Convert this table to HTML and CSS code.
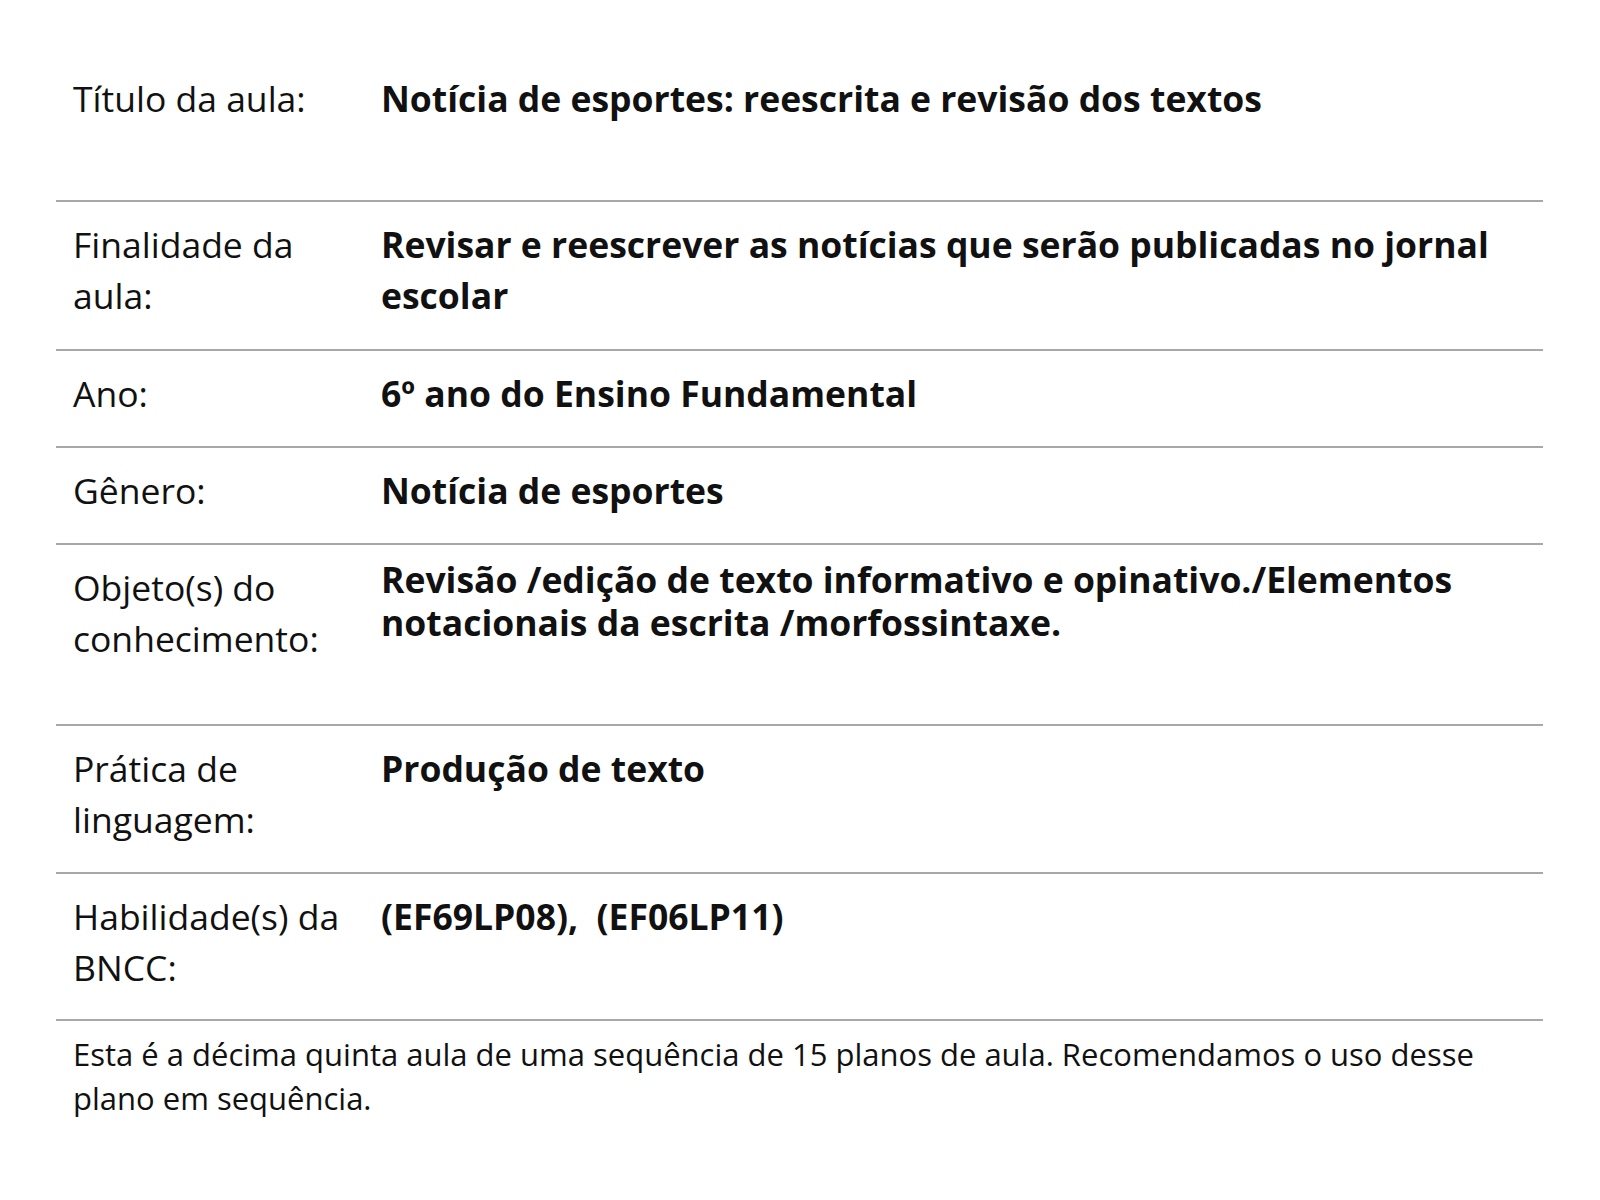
FILE: index.html
```html
<!DOCTYPE html>
<html lang="pt-BR">
<head>
<meta charset="utf-8">
<title>Plano de aula</title>
<link rel="stylesheet" href="styles.css">
</head>
<body>
<div class="sheet">
  <div class="row row-first">
    <div class="label">Título da aula:</div>
    <div class="value">Notícia de esportes: reescrita e revisão dos textos</div>
  </div>
  <div class="row row-two">
    <div class="label">Finalidade da aula:</div>
    <div class="value">Revisar e reescrever as notícias que serão publicadas no jornal escolar</div>
  </div>
  <div class="row">
    <div class="label">Ano:</div>
    <div class="value">6º ano do Ensino Fundamental</div>
  </div>
  <div class="row">
    <div class="label">Gênero:</div>
    <div class="value">Notícia de esportes</div>
  </div>
  <div class="row row-tall">
    <div class="label">Objeto(s) do conhecimento:</div>
    <div class="value value-tight">Revisão /edição de texto informativo e opinativo./Elementos notacionais da escrita /morfossintaxe.</div>
  </div>
  <div class="row">
    <div class="label">Prática de linguagem:</div>
    <div class="value">Produção de texto</div>
  </div>
  <div class="row row-last">
    <div class="label">Habilidade(s) da BNCC:</div>
    <div class="value">(EF69LP08),&nbsp; (EF06LP11)</div>
  </div>
  <p class="note">Esta é a décima quinta aula de uma sequência de 15 planos de aula. Recomendamos o uso desse plano em sequência.</p>
</div>
</body>
</html>
```

FILE: styles.css
```css
html, body {
  margin: 0;
  padding: 0;
  background: #ffffff;
}

body {
  font-family: "Open Sans", "Noto Sans", "DejaVu Sans", sans-serif;
  color: #111111;
}

.sheet {
  margin: 56px 0 0 56px;
  width: 1487px;
}

.row {
  display: grid;
  grid-template-columns: 308px 1fr;
  padding: 17px 0 27px 17px;
  border-bottom: 2px solid #a8a8a8;
  font-size: 35.5px;
  line-height: 51px;
}

.row-first {
  padding-bottom: 76px;
}

.row-two {
  padding-bottom: 28px;
}

.row-tall {
  padding-bottom: 60px;
}

.row-last {
  padding-bottom: 26px;
}

.label {
  font-weight: 400;
  padding-right: 20px;
}

.value {
  font-weight: 700;
}

.value-tight {
  line-height: 43px;
  margin-top: -4px;
}

.note {
  margin: 0;
  padding: 11px 0 0 17px;
  font-size: 31px;
  line-height: 44px;
  font-weight: 400;
}
```
